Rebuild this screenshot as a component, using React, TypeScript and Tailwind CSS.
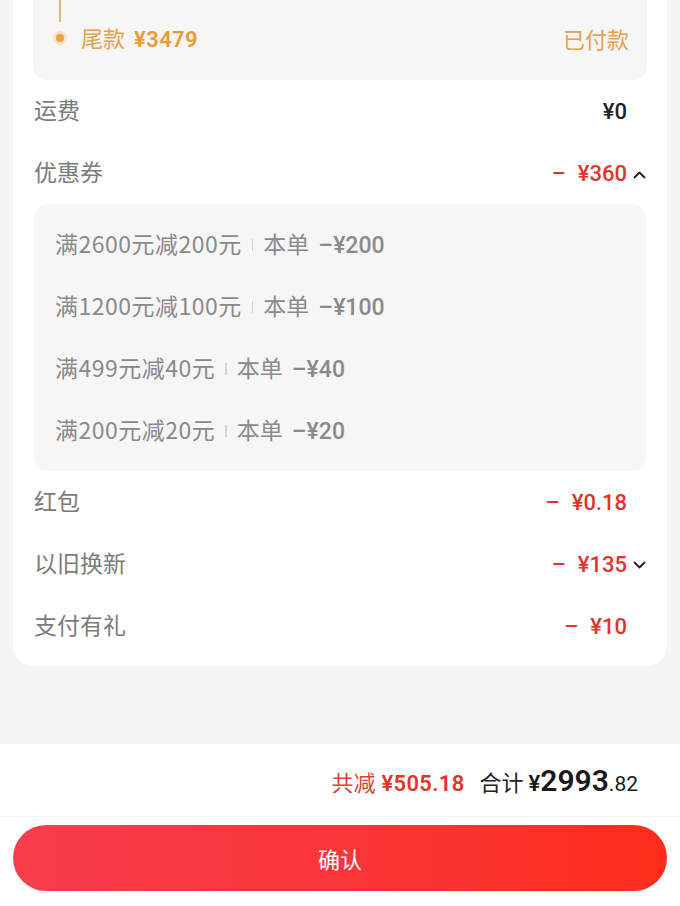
import React from "react";

const NUM = "font-['Roboto','Noto_Sans_CJK_SC',sans-serif]";

function ChevronUp() {
  return (
    <svg width="13" height="9" viewBox="0 0 13 9" className="block">
      <polyline points="1.5,7.5 6.5,2.5 11.5,7.5" fill="none" stroke="#222" strokeWidth="1.8" strokeLinecap="round" strokeLinejoin="round" />
    </svg>
  );
}
function ChevronDown() {
  return (
    <svg width="13" height="9" viewBox="0 0 13 9" className="block">
      <polyline points="1.5,1.5 6.5,6.5 11.5,1.5" fill="none" stroke="#222" strokeWidth="1.8" strokeLinecap="round" strokeLinejoin="round" />
    </svg>
  );
}

function Row({ label, value, red, chevron }: { label: string; value: string; red?: boolean; chevron?: "up" | "down" }) {
  return (
    <div className="flex h-[62px] items-center pb-[2px]">
      <div className="flex w-full items-baseline justify-between">
        <span className="text-[23px] text-[#7b7b7b]">{label}</span>
        <div className="flex items-baseline">
          <span className={`${NUM} text-[22px] font-medium ${red ? "text-[#e5332b]" : "text-[#222]"}`}>
            {red ? <span className="mr-[12px]">–</span> : null}
            {value}
          </span>
          <span className="flex w-[19px] justify-end self-center pt-[2px]">
            {chevron === "up" ? <ChevronUp /> : chevron === "down" ? <ChevronDown /> : null}
          </span>
        </div>
      </div>
    </div>
  );
}

function Coupon({ cond, amount }: { cond: string; amount: string }) {
  return (
    <div className="flex h-[62px] items-center pb-[3px]">
      <div className="flex items-baseline text-[23px] text-[#8a8a8a]">
        <span className="tracking-[0.5px]">{cond}</span>
        <span className="mx-[10px] h-[12px] w-[1.5px] self-center bg-[#d4d4d4]" />
        <span>本单</span>
        <span className={`${NUM} ml-[9px] font-medium`}>–¥{amount}</span>
      </div>
    </div>
  );
}

export default function App() {
  return (
    <div className="min-h-[906px] w-[680px] bg-[#f5f5f5] font-['Noto_Sans_CJK_SC','Noto_Sans',sans-serif]">
      <div className="mx-[13px] rounded-b-[20px] bg-white px-[21px] pb-[9px]">
        {/* installment box */}
        <div className="-mx-px rounded-b-[14px] bg-[#f6f6f6] pl-[23px] pr-[18px]">
          <div className="ml-[3px] h-[22px] w-[1.5px] bg-[#e2b57a]" />
          <div className="flex h-[36px] items-center justify-between pb-[4px]">
            <div className="flex items-center">
              <span className="h-[8px] w-[8px] rounded-full bg-[#f0a040] shadow-[0_0_0_3px_rgba(245,175,90,0.28)]" />
              <span className="ml-[17px] flex items-baseline">
                <span className="text-[22px] text-[#e9a04e]">尾款</span>
                <span className={`${NUM} ml-[9px] text-[22px] font-semibold tracking-[0.4px] text-[#ec9a37]`}>¥3479</span>
              </span>
            </div>
            <span className="text-[22px] text-[#e9a04e]">已付款</span>
          </div>
          <div className="h-[22px]" />
        </div>

        <Row label="运费" value="¥0" />
        <Row label="优惠券" value="¥360" red chevron="up" />

        <div className="rounded-[14px] bg-[#f6f6f6] px-[21px] pt-[11px] pb-[8px]">
          <Coupon cond="满2600元减200元" amount="200" />
          <Coupon cond="满1200元减100元" amount="100" />
          <Coupon cond="满499元减40元" amount="40" />
          <Coupon cond="满200元减20元" amount="20" />
        </div>

        <Row label="红包" value="¥0.18" red />
        <Row label="以旧换新" value="¥135" red chevron="down" />
        <Row label="支付有礼" value="¥10" red />
      </div>

      <div className="h-[78px]" />

      <div className="bg-white pb-[14px]">
        <div className="flex h-[73px] items-center justify-end border-b border-[#f3f3f3] pr-[42px]">
          <div className="flex items-baseline">
            <span className="text-[22px] text-[#d9433a]">共减</span>
            <span className={`${NUM} ml-[6px] text-[22px] font-semibold tracking-[0.3px] text-[#e5332b]`}>¥505.18</span>
            <span className="ml-[15px] text-[22px] text-[#222]">合计</span>
            <span className={`${NUM} ml-[5px] font-semibold text-[#1a1a1a]`}>
              <span className="text-[22px]">¥</span>
              <span className="text-[30px]">2993</span>
              <span className="text-[21px] font-normal">.82</span>
            </span>
          </div>
        </div>
        <div className="px-[13px] pt-[8px]">
          <div className="flex h-[66px] items-center justify-center rounded-full bg-gradient-to-r from-[#f73d4c] to-[#fe2d19] text-[22px] text-white">
            确认
          </div>
        </div>
      </div>
    </div>
  );
}
